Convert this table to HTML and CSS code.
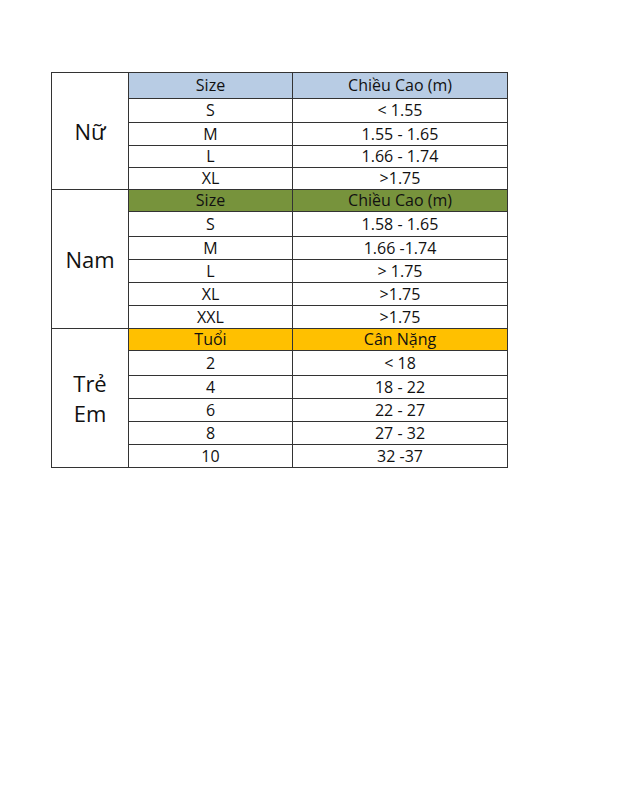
FILE: index.html
```html
<!DOCTYPE html>
<html lang="vi">
<head>
<meta charset="utf-8">
<link rel="stylesheet" href="styles.css">
</head>
<body>
<table class="size-table">
  <colgroup><col class="c1"><col class="c2"><col class="c3"></colgroup>
  <tbody>
    <tr class="h26"><td class="group" rowspan="5">Nữ</td><td class="blue">Size</td><td class="blue">Chiều Cao (m)</td></tr>
    <tr class="h24"><td>S</td><td>&lt; 1.55</td></tr>
    <tr class="h23"><td>M</td><td>1.55 - 1.65</td></tr>
    <tr class="h22"><td>L</td><td>1.66 - 1.74</td></tr>
    <tr class="h22"><td>XL</td><td>&gt;1.75</td></tr>

    <tr class="h22"><td class="group" rowspan="6">Nam</td><td class="green">Size</td><td class="green">Chiều Cao (m)</td></tr>
    <tr class="h25"><td>S</td><td>1.58 - 1.65</td></tr>
    <tr class="h23"><td>M</td><td>1.66 -1.74</td></tr>
    <tr class="h23"><td>L</td><td>&gt; 1.75</td></tr>
    <tr class="h23"><td>XL</td><td>&gt;1.75</td></tr>
    <tr class="h23"><td>XXL</td><td>&gt;1.75</td></tr>

    <tr class="h22"><td class="group" rowspan="6">Trẻ<br>Em</td><td class="orange">Tuổi</td><td class="orange">Cân Nặng</td></tr>
    <tr class="h25"><td>2</td><td>&lt; 18</td></tr>
    <tr class="h23"><td>4</td><td>18 - 22</td></tr>
    <tr class="h23"><td>6</td><td>22 - 27</td></tr>
    <tr class="h23"><td>8</td><td>27 - 32</td></tr>
    <tr class="h23"><td>10</td><td>32 -37</td></tr>
  </tbody>
</table>
</body>
</html>
```

FILE: styles.css
```css
html, body {
  margin: 0;
  padding: 0;
  background: #ffffff;
}
body {
  padding: 72px 0 0 51px;
  font-family: "Open Sans", "Noto Sans", sans-serif;
  color: #111111;
}
.size-table {
  border-collapse: collapse;
  table-layout: fixed;
  width: 456px;
}
.c1 { width: 77px; }
.c2 { width: 164px; }
.c3 { width: 215px; }
.size-table td {
  border: 1px solid #333333;
  padding: 0;
  text-align: center;
  vertical-align: middle;
  font-size: 16px;
  line-height: 19px;
}
.size-table td.group {
  font-size: 22px;
  line-height: 30px;
}
.h26 { height: 26px; }
.h25 { height: 25px; }
.h24 { height: 24px; }
.h23 { height: 23px; }
.h22 { height: 22px; }
.blue { background: #b8cce4; }
.green { background: #77933c; }
.orange { background: #ffc000; }
```
